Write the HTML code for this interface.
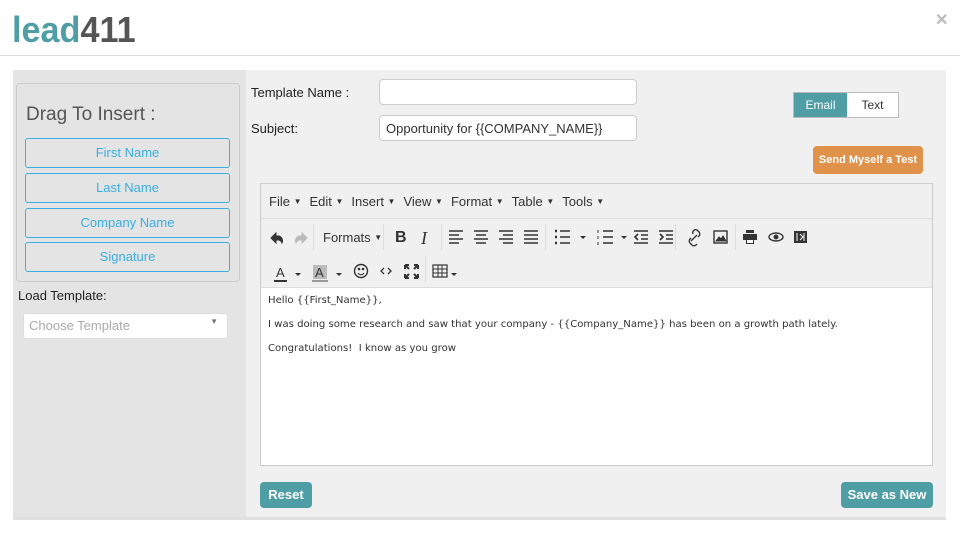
<!DOCTYPE html>
<html><head><meta charset="utf-8"><style>
*{box-sizing:border-box;margin:0;padding:0}
body{width:960px;height:533px;background:#fff;font-family:"Liberation Sans",sans-serif;position:relative;overflow:hidden;color:#333}
.a{position:absolute}
.logo{left:12px;top:9px;font-size:36px;font-weight:bold;transform:scaleX(0.95);transform-origin:left}
.close{left:935px;top:10px;font-size:16px;color:#bbb;font-weight:bold}
.hr{left:0;top:55px;width:960px;height:1px;background:#ddd}
.left{left:13px;top:70px;width:233px;height:450px;background:#e4e4e4}
.right{left:246px;top:70px;width:700px;height:450px;background:#f0f0f0}
.bot{left:13px;top:517px;width:933px;height:3px;background:#e0e0e0}
.panel{left:16px;top:83px;width:224px;height:199px;border:1px solid #ccc;border-radius:4px}
.dti{left:26px;top:104px;font-size:19px;color:#555}
.tok{left:25px;width:205px;height:30px;border:1.5px solid #3aaee0;border-radius:3px;color:#3aaee0;font-size:13px;text-align:center;line-height:27px}
.lbl{font-size:13px;color:#222}
.sel{left:23px;top:313px;width:205px;height:26px;background:#fff;border-radius:3px;font-size:13px;color:#aaa;padding:4px 5px;border:1px solid #ddd}
.inp{left:379px;width:258px;height:26px;background:#fff;border:1px solid #ccc;border-radius:4px;font-size:13px;padding:5px 6px;color:#333}
.tog{left:793px;top:92px;width:106px;height:26px;border:1px solid #bbb;background:#fff;font-size:12px}
.btn{color:#fff;font-weight:bold;font-size:12px;border-radius:4px;text-align:center}
.ed{left:260px;top:183px;width:673px;height:283px;border:1px solid #ccc;background:#fff}
.mb{position:absolute;left:0;top:0;width:100%;height:104px;background:#f0f0f0;border-bottom:1px solid #ddd}
.menu{position:absolute;left:8px;top:10px;font-size:13px;color:#333}
.menu span{margin-right:8px}
.menu i{font-style:normal;font-size:8px;vertical-align:2px}
.tb{position:absolute;font-size:14px;color:#333}
.ct{position:absolute;left:7px;font-family:"DejaVu Sans",sans-serif;font-size:10.1px;color:#333}
.sep{position:absolute;width:1px;height:26px;background:#ddd}
svg.t{position:absolute}
</style></head><body>
<div class="a logo"><span style="color:#4f9ea6">lead</span><span style="color:#555">411</span></div>
<div class="a close">✕</div>
<div class="a hr"></div>
<div class="a left"></div><div class="a right"></div><div class="a bot"></div>
<div class="a panel"></div>
<div class="a dti">Drag To Insert :</div>
<div class="a tok" style="top:138px">First Name</div>
<div class="a tok" style="top:173px">Last Name</div>
<div class="a tok" style="top:208px">Company Name</div>
<div class="a tok" style="top:242px">Signature</div>
<div class="a lbl" style="left:18px;top:288px">Load Template:</div>
<div class="a sel">Choose Template<span style="position:absolute;right:9px;top:3px;font-size:8px;color:#777">▼</span></div>
<div class="a lbl" style="left:251px;top:85px">Template Name :</div>
<div class="a lbl" style="left:251px;top:121px">Subject:</div>
<div class="a inp" style="top:79px"></div>
<div class="a inp" style="top:115px">Opportunity for {{COMPANY_NAME}}</div>
<div class="a tog"><div style="position:absolute;left:0;top:0;width:53px;height:24px;background:#4f9ea6;color:#fff;text-align:center;line-height:24px">Email</div><div style="position:absolute;left:53px;top:0;width:51px;text-align:center;line-height:24px;color:#333">Text</div></div>
<div class="a btn" style="left:813px;top:146px;width:110px;height:28px;line-height:28px;background:#e0924a;font-size:11px">Send Myself a Test</div>
<div class="a ed">
<div class="mb">
<div class="menu"><span>File <i>▼</i></span><span>Edit <i>▼</i></span><span>Insert <i>▼</i></span><span>View <i>▼</i></span><span>Format <i>▼</i></span><span>Table <i>▼</i></span><span>Tools <i>▼</i></span></div>
<div style="position:absolute;left:0;top:34px;width:100%;height:1px;background:#ddd"></div>
<svg class="t" style="left:0;top:35px" width="673" height="70" viewBox="0 0 673 70" fill="none" stroke="#333">
<path d="M10 19 l5-5 v3 h3 a5 5 0 0 1 3 7 a5 5 0 0 0-3-3 h-3 v3z" fill="#333"/>
<path d="M46 19 l-5-5 v3 h-3 a5 5 0 0 0-3 7 a5 5 0 0 1 3-3 h3 v3z" fill="#bbb" stroke="#bbb"/>
<g stroke-width="1.6">
<path d="M188 12h14M188 16h10M188 20h14M188 24h10"/>
<path d="M213 12h14M215 16h10M213 20h14M215 24h10"/>
<path d="M238 12h14M242 16h10M238 20h14M242 24h10"/>
<path d="M263 12h14M263 16h14M263 20h14M263 24h14"/>
<path d="M299 12h10M299 18h10M299 24h10"/><path d="M294 12h2M294 18h2M294 24h2" stroke-width="2.5"/>
<path d="M342 12h10M342 18h10M342 24h10"/><path d="M337 11v3M337 17v3M337 23v3" stroke-width="1"/>
<path d="M373 12h14M380 16h7M380 20h7M373 24h14"/><path d="M377 15l-3 3 3 3"/>
<path d="M398 12h14M405 16h7M405 20h7M398 24h14"/><path d="M399 15l3 3-3 3"/>
</g>
<path d="M319 17l3 3 3-3z M360 17l3 3 3-3z" fill="#333" stroke="none"/>
<path d="M430 22l6-6m-4-1a3 3 0 0 1 4-4l2 2a3 3 0 0 1 0 4l-1 1m-7 1l-1 1a3 3 0 0 0 0 4l2 2a3 3 0 0 0 4 0l1-1" stroke-width="1.4"/>
<rect x="453" y="12" width="13" height="12" stroke-width="1.4"/><path d="M455 22l3-4 2 2 2-3 3 5z" fill="#333"/>
<path d="M485 11h8v3h-8z M482 15h14v6h-14z M485 20h8v5h-8z" fill="#333" stroke="none"/><rect x="486" y="21" width="6" height="3" fill="#fff" stroke="none"/>
<ellipse cx="515" cy="18" rx="7" ry="4" stroke-width="1.4"/><circle cx="515" cy="18" r="2" fill="#333"/>
<rect x="533" y="12" width="13" height="12" fill="#333" stroke="none"/><path d="M536 14v8M543 14v8M539 15l3 3-3 3" stroke="#fff"/>
<text x="15" y="58" font-family="Liberation Sans" font-size="13" fill="#333" stroke="none">A</text><path d="M13 62h13" stroke-width="2"/>
<path d="M34 54l3 3 3-3z M75 54l3 3 3-3z M190 54l3 3 3-3z" fill="#333" stroke="none"/>
<rect x="52" y="46" width="14" height="14" fill="#bbb" stroke="none"/><text x="54" y="58" font-family="Liberation Sans" font-size="13" fill="#333" stroke="none">A</text><path d="M51 62h16" stroke="#999" stroke-width="2"/>
<circle cx="100" cy="52" r="6.5" stroke-width="1.4"/><circle cx="98" cy="50" r=".8" fill="#333"/><circle cx="102" cy="50" r=".8" fill="#333"/><path d="M97 54a3.5 3.5 0 0 0 6 0"/>
<path d="M123 49l-3 3 3 3M127 49l3 3-3 3" stroke-width="1.3"/>
<path d="M144 46l4 4M144 46h4M144 46v4 M157 46l-4 4M157 46h-4M157 46v4 M144 59l4-4M144 59h4M144 59v-4 M157 59l-4-4M157 59h-4M157 59v-4" stroke-width="2"/>
<rect x="172" y="46" width="14" height="12" stroke-width="1.2"/><path d="M172 50h14M172 54h14M177 46v12M181 46v12" stroke-width="1"/>
</svg>
<div class="sep" style="left:52px;top:40px"></div>
<div class="tb" style="left:62px;top:46px;font-size:13px">Formats <span style="font-size:8px;vertical-align:2px">▼</span></div>
<div class="sep" style="left:122px;top:40px"></div>
<div class="tb" style="left:134px;top:45px;font-weight:bold;font-size:16px">B</div>
<div class="tb" style="left:160px;top:44px;font-style:italic;font-family:'Liberation Serif';font-size:18px">I</div>
<div class="sep" style="left:180px;top:40px"></div>
<div class="sep" style="left:284px;top:40px"></div>
<div class="sep" style="left:414px;top:40px"></div>
<div class="sep" style="left:474px;top:40px"></div>
<div class="sep" style="left:164px;top:72px"></div>
</div>
<div class="ct" style="top:111px">Hello {{First_Name}},</div>
<div class="ct" style="top:135px">I was doing some research and saw that your company - {{Company_Name}} has been on a growth path lately.</div>
<div class="ct" style="top:159px">Congratulations!&nbsp; I know as you grow</div>
</div>
<div class="a btn" style="left:260px;top:482px;width:52px;height:26px;line-height:26px;background:#4f9ea6;font-size:13px">Reset</div>
<div class="a btn" style="left:841px;top:482px;width:92px;height:26px;line-height:26px;background:#4f9ea6;font-size:13px">Save as New</div>
</body></html>
